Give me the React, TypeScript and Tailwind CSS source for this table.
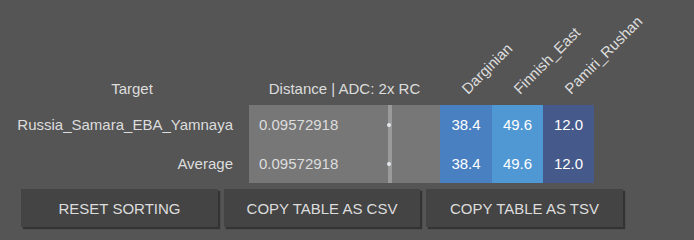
import React from "react";

type Row = { name: string; distance: string; values: string[] };

const rows: Row[] = [
  { name: "Russia_Samara_EBA_Yamnaya", distance: "0.09572918", values: ["38.4", "49.6", "12.0"] },
  { name: "Average", distance: "0.09572918", values: ["38.4", "49.6", "12.0"] },
];

const columns = [
  { label: "Darginian", w: "w-[52px]", bg: "bg-[#4880c2]" },
  { label: "Finnish_East", w: "w-[51px]", bg: "bg-[#5098d4]" },
  { label: "Pamiri_Rushan", w: "w-[51px]", bg: "bg-[#455a8b]" },
];

function Button({ label, w }: { label: string; w: string }) {
  return (
    <button
      className={`${w} h-[38px] bg-[#444444] text-[#dddddd] text-[15px] uppercase shadow-[2px_2px_1px_#333333]`}
    >
      {label}
    </button>
  );
}

export default function App() {
  return (
    <div
      className="w-[694px] h-[240px] bg-[#555555] text-[#dddddd] text-[15px] leading-[17px]"
      style={{ fontFamily: '"Liberation Sans", Arial, sans-serif' }}
    >
      <div className="pl-[15px]">
        {/* header row */}
        <div className="flex h-[105px] items-end">
          <div className="w-[234px] text-center pb-[8px]">Target</div>
          <div className="w-[191px] text-center pb-[8px]">Distance | ADC: 2x RC</div>
          {columns.map((c) => (
            <div key={c.label} className={`${c.w} h-full relative`}>
              <span className="absolute left-[30px] bottom-[8px] origin-bottom-left -rotate-45 whitespace-nowrap">
                {c.label}
              </span>
            </div>
          ))}
        </div>

        {/* body */}
        <div className="flex">
          <div className="w-[234px] flex flex-col">
            {rows.map((r) => (
              <div key={r.name} className="h-[39px] flex items-center justify-end pr-[16px]">
                {r.name}
              </div>
            ))}
          </div>
          <div className="w-[191px] bg-[#777777] relative flex flex-col">
            <div className="absolute left-[139px] top-0 bottom-0 w-[4px] bg-[#9a9a9a]" />
            {rows.map((r) => (
              <div key={r.name} className="h-[39px] flex items-center pl-[10px] relative">
                {r.distance}
                <div className="absolute left-[138px] top-[18px] w-[4px] h-[4px] rounded-full bg-[#e4e8ee]" />
              </div>
            ))}
          </div>
          {columns.map((c, i) => (
            <div key={c.label} className={`${c.w} ${c.bg} flex flex-col text-white`}>
              {rows.map((r) => (
                <div key={r.name} className="h-[39px] flex items-center justify-center">
                  {r.values[i]}
                </div>
              ))}
            </div>
          ))}
        </div>

        {/* actions */}
        <div className="flex gap-[6px] mt-[6px] pl-[6px]">
          <Button label="Reset sorting" w="w-[197px]" />
          <Button label="Copy table as CSV" w="w-[196px]" />
          <Button label="Copy table as TSV" w="w-[197px]" />
        </div>
      </div>
    </div>
  );
}
